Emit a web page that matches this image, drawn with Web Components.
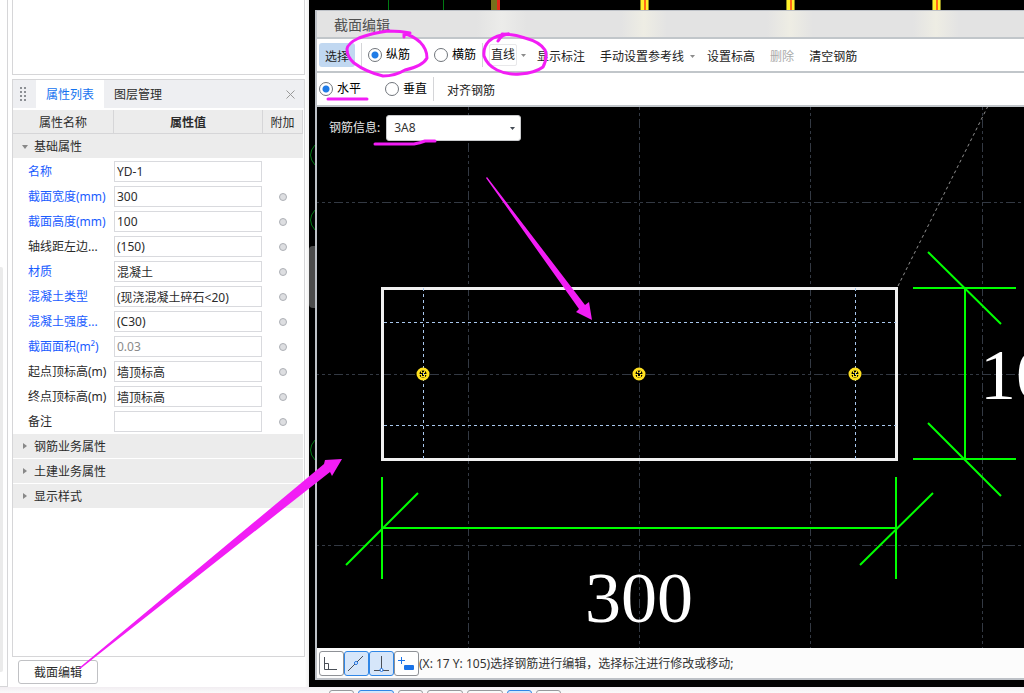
<!DOCTYPE html>
<html lang="zh-CN">
<head>
<meta charset="utf-8">
<title>截面编辑</title>
<style>
  html, body { margin: 0; height: 100%; overflow: hidden; }
  body {
    font: 12px/16px "Noto Sans", "Noto Sans CJK SC", sans-serif;
    color: #2b2b2b;
    background: #fdfdfd;
  }
</style>
</head>
<body>
<app-shell>
  <property-dock slot="dock"></property-dock>
  <section-editor slot="work" heading="截面编辑">
    <tool-bar slot="tools">
      <tool-button active>选择</tool-button>
      <tool-separator></tool-separator>
      <radio-pair name="bar" first="纵筋" second="横筋"></radio-pair>
      <tool-separator></tool-separator>
      <tool-group>
        <tool-button menu framed>直线</tool-button>
        <tool-button>显示标注</tool-button>
        <tool-button menu>手动设置参考线</tool-button>
        <tool-button>设置标高</tool-button>
        <tool-button disabled>删除</tool-button>
        <tool-button>清空钢筋</tool-button>
      </tool-group>
    </tool-bar>
    <tool-bar slot="tools">
      <radio-pair name="direction" first="水平" second="垂直"></radio-pair>
      <tool-separator></tool-separator>
      <tool-button>对齐钢筋</tool-button>
    </tool-bar>
    <cad-canvas slot="canvas"></cad-canvas>
    <status-bar slot="status">(X: 17 Y: 105)选择钢筋进行编辑，选择标注进行修改或移动;</status-bar>
  </section-editor>
</app-shell>

<script>
const define = (name, html, setup) => {
  const template = document.createElement('template');
  template.innerHTML = html;
  customElements.define(name, class extends HTMLElement {
    constructor() {
      super();
      this.attachShadow({ mode: 'open' }).append(template.content.cloneNode(true));
    }
    connectedCallback() {
      if (setup && !this.ready) { this.ready = true; setup(this, this.shadowRoot); }
    }
  });
};

/* Hand-drawn markers that lie over the whole window */
define('markup-layer', `
<style>
  :host { position: absolute; inset: 0; pointer-events: none; }
  svg { display: block; width: 100%; height: 100%; }
</style>
<svg aria-hidden="true" fill="none" stroke="#f21df5" stroke-width="3" stroke-linecap="round" stroke-linejoin="round">
  <path d="M404 37V34L410 33Q401 31 388 31Q372 33 359 38Q348 43 347 49Q347 57 354 63Q366 72 383 76Q395 76 405 70Q423 66 427 58Q427 49 420 42Q412 35 404 34"/>
  <path d="M498 41Q502 34 509 34Q496 35 489 41Q483 47 484 56Q487 65 497 70Q507 75 520 74Q535 73 543 67Q548 57 545 50Q540 42 525 38Q513 34 502 34"/>
  <path d="M328 99H367M375 144H414Q420 143 425 141H435"/>
  <g fill="#f21df5" stroke="none">
    <path d="M79 668L324 464L325 460L342 459L332 476L330 472L80 669Z"/>
    <path d="M487 177L585 305L589 302L592 320L576 312L579 309L486 178Z"/>
  </g>
</svg>`);

define('bottom-strip', `
<style>
  :host { display: flex; gap: 4px; height: 6px; padding: 3px 0 0 329px; box-sizing: border-box;
          overflow: hidden; background: linear-gradient(#f1edf1, #fafafa); }
  i { flex: none; box-sizing: border-box; width: 25px; height: 20px; border: 1px solid #97999d; border-radius: 3px; background: #fafafa; }
  i.wide { width: 36px; }
  i.on { border-color: #2f86e6; background: #d6e6fa; }
</style>
<i></i><i class="wide on"></i><i></i><i class="wide"></i><i class="wide"></i><i class="on"></i><i></i>`);

define('app-shell', `
<style>
  :host { position: relative; display: flex; flex-direction: column; height: 100vh; overflow: hidden; }
  main { flex: 1; min-height: 0; display: flex; }
  .edge { flex: none; width: 7px; border-right: 1px solid #d6d6d8; border-bottom: 1px solid #d6d6d8; background: #fff; }
  .edge i { display: block; width: 3px; height: 59%; margin-top: 267px; border-radius: 0 2px 2px 0; background: #ebebeb; }
  .dock { flex: none; display: flex; width: 293px; padding: 0 4px; background: linear-gradient(90deg, #fff 297px, #eee); }
  .work { flex: 1; min-width: 0; display: flex; }
</style>
<main>
  <div class="edge"><i></i></div>
  <div class="dock"><slot name="dock"></slot></div>
  <div class="work"><slot name="work"></slot></div>
</main>
<bottom-strip></bottom-strip>
<markup-layer></markup-layer>`);

define('property-dock', `
<style>
  :host { flex: 1; min-width: 0; display: flex; flex-direction: column; }
  .upper { height: 74px; border: 1px solid #d6d6d8; border-top: 0; background: #fff; }
  .panel { flex: 1; margin-top: 4px; border: 1px solid #d6d6d8; background: #fff; }
  header { display: flex; height: 28px; margin-bottom: 2px; background: #eeeff2; }
  .grip { width: 23px; padding-right: 2px; box-sizing: border-box; display: grid; place-items: center; }
  button { font: inherit; color: inherit; border: 0; background: none; padding: 0; }
  .tab { padding: 2px 10px 0; }
  .tab.on { color: #1473f0; background: #fff; }
  .close { margin-left: auto; width: 28px; display: grid; place-items: center; }
  .foot { padding: 3px 6px; }
  .edit { display: block; width: 80px; height: 24px; padding-top: 2px; border: 1px solid #c0c1c4; border-radius: 3px; background: #fff; }
</style>
<div class="upper"></div>
<section class="panel">
  <header>
    <span class="grip"><svg width="7" height="14" fill="#8c8f94"><path d="M0 0h2v2H0zM4 0h2v2H4zM0 4h2v2H0zM4 4h2v2H4zM0 8h2v2H0zM4 8h2v2H4zM0 12h2v2H0zM4 12h2v2H4z"/></svg></span>
    <button class="tab on">属性列表</button><button class="tab">图层管理</button>
    <button class="close" aria-label="关闭"><svg width="9" height="9" stroke="#999"><path d="M.5 .5l8 8M8.5 .5l-8 8"/></svg></button>
  </header>
  <property-table></property-table>
</section>
<div class="foot"><button class="edit">截面编辑</button></div>`);

define('property-table', `
<style>
  :host { display: block; }
  table { width: 290px; table-layout: fixed; border-collapse: separate; border-spacing: 0; }
  th, td { padding: 0; height: 25px; box-sizing: border-box; }
  thead th { height: 24px; padding-top: 2px; font-weight: 400; background: #ececec; border-right: 1px solid #d6d6d8; border-bottom: 1px solid #d6d6d8; }
  thead th.value { font-weight: 600; }
  .group th { text-align: left; font-weight: 400; background: #ececec; border-bottom: 1px solid #fff; padding: 2px 0 0 8px; }
  .group span { display: flex; align-items: center; gap: 5px; }
  .group svg { width: 8px; height: 8px; fill: #888; }
  tbody td { text-align: left; }
  td.name { padding-left: 15px; white-space: nowrap; }
  td.name.blue { color: #1a5cff; }
  input.text { display: block; box-sizing: border-box; width: 148px; height: 21px; padding: 0 2px;
    border: 1px solid #d9dade; background: #fff; font: inherit; color: inherit; outline: 0; }
  input.text:disabled { color: #8a8a8a; }
  input.extra { display: block; appearance: none; box-sizing: border-box; width: 8px; height: 8px; margin: 0 auto; border: 1px solid #adb0b5; border-radius: 50%; background: #dddee1; }
</style>
<table>
  <colgroup><col style="width:101px"><col style="width:149px"><col></colgroup>
  <thead><tr><th>属性名称</th><th class="value">属性值</th><th>附加</th></tr></thead>
  <tbody></tbody>
</table>`, (host, root) => {
  const rows = [
    ['名称', 'YD-1', 1, 0], ['截面宽度(mm)', '300', 1, 1], ['截面高度(mm)', '100', 1, 1],
    ['轴线距左边...', '(150)', 0, 1], ['材质', '混凝土', 1, 1], ['混凝土类型', '(现浇混凝土碎石<20)', 1, 1],
    ['混凝土强度...', '(C30)', 1, 1], ['截面面积(m²)', '0.03', 1, 1, 'disabled'],
    ['起点顶标高(m)', '墙顶标高', 0, 1], ['终点顶标高(m)', '墙顶标高', 0, 1], ['备注', '', 0, 1]
  ];
  const group = (text, open) => `<tr class="group"><th colspan="3"><span><svg><path d="${open ? 'M1 2h6L4 6z' : 'M2 0v6l4-3z'}"/></svg>${text}</span></th></tr>`;
  root.querySelector('tbody').innerHTML = group('基础属性', true) +
    rows.map(([name, value, blue, extra, state = ''], i) => `<tr>
      <td class="name ${blue ? 'blue' : ''}"><label for="p${i}">${name}</label></td>
      <td class="value"><input class="text" id="p${i}" value="${value.replace('<', '&lt;')}" ${state}></td>
      <td>${extra ? `<input class="extra" type="checkbox" aria-label="附加 ${name}">` : ''}</td></tr>`).join('') +
    ['钢筋业务属性', '土建业务属性', '显示样式'].map(t => group(t, false)).join('');
});

/* Model view with the section editor window docked over it */
define('section-editor', `
<style>
  :host { position: relative; flex: 1; min-width: 0; display: flex; box-sizing: border-box; padding: 10px 0 7px 6px; background: #000; }
  .model { position: absolute; inset: 0; width: 100%; height: 100%; }
  .window { position: relative; flex: 1; min-width: 0; display: flex; flex-direction: column; border: solid #bdc1c7; border-width: 1px 0 2px 2px; background: #fff; }
  h1 { margin: 0; box-sizing: border-box; height: 28px; padding: 0 17px; border-bottom: 2px solid #c1c6ca; font-size: 14px; line-height: 28px; font-weight: 400; color: #505050;
    background: linear-gradient(90deg, #0000 160px, #ececea 185px, #0000 210px, #0000 304px, #eeede4 327px, #0000 350px, #0000 450px, #eeede4 473px, #0000 496px, #0000 596px, #eeede4 619px, #0000 642px), #e3e3e3; }
  ::slotted(cad-canvas) { flex: 1; min-height: 0; }
</style>
<svg class="model" aria-hidden="true" fill="none">
  <path stroke="#007a12" d="M79.500 0v11M134.500 0v11M6 145Q-3 155 6 165M6 210Q-3 220 6 230M6 440Q-3 450 6 460"/>
  <path fill="#77701c" d="M182 0h6v11h-6z"/><path fill="#e02818" d="M188 0h3v11h-3z"/>
  <path fill="#8d8a20" d="M331 0h9v11h-9zM477 0h9v11h-9zM623 0h9v11h-9z"/>
  <path fill="#fff02a" d="M332 0h7v11h-7zM478 0h7v11h-7zM624 0h7v11h-7z"/>
  <path fill="#ff6a18" d="M335 0h2v11h-2zM481 0h2v11h-2zM627 0h2v11h-2z"/>
  <rect y="246" width="14" height="62" rx="4" fill="#4b4b4b"/>
</svg>
<div class="window">
  <h1></h1>
  <slot name="tools"></slot>
  <slot name="canvas"></slot>
  <slot name="status"></slot>
</div>`, (host, root) => { root.querySelector('h1').textContent = host.getAttribute('heading'); });

define('tool-bar', `
<style>
  :host { display: flex; align-items: center; gap: 6px; box-sizing: border-box; height: 34px; padding: 0 2px; border-bottom: 2px solid #c1c6ca; background: #fff; white-space: nowrap; color: #222; }
</style><slot></slot>`);

define('tool-group', `<style>:host { display: flex; align-items: center; gap: 1px; }</style><slot></slot>`);

define('tool-separator', `<style>:host { width: 1px; height: 24px; background: #d4d5d8; }</style>`);

define('tool-button', `
<style>
  :host { display: block; }
  button { display: flex; align-items: center; box-sizing: border-box; height: 24px; padding: 3px 7px 0; border: 0; border-radius: 3px; background: none; font: inherit; color: inherit; }
  button:disabled { color: #aaa; }
  svg { display: none; width: 5px; height: 3px; margin-left: 6px; fill: #8c8c8c; }
  :host([menu]) svg { display: block; }
  :host([menu]) button { padding-right: 4px; }
  :host([active]) button { padding: 3px 6px 0; background: #c1d8f1; }
  :host([framed]) button { padding: 0 3px 0 0; }
  :host([framed]) span { padding: 2px 1px; border: 1px solid #e8e8ea; border-radius: 2px; }
  :host([framed]) svg { margin-left: 4px; }
</style>
<button><span><slot></slot></span><svg><path d="M0 0h5L2.500 3z"/></svg></button>`,
(host, root) => { root.querySelector('button').disabled = host.hasAttribute('disabled'); });

define('radio-pair', `
<style>
  :host { display: flex; gap: 24px; color: #000; }
  label { display: flex; align-items: center; gap: 4px; }
  input { appearance: none; box-sizing: border-box; width: 14px; height: 14px; margin: 0; border: 1px solid #70757b; border-radius: 50%; background: #fff; }
  input:checked { background: radial-gradient(circle, #1f7be6 3px, #fff 4px); }
</style>
<label><input type="radio" checked><span></span></label>
<label><input type="radio"><span></span></label>`, (host, root) => {
  root.querySelectorAll('label').forEach((label, i) => {
    label.querySelector('input').name = host.getAttribute('name');
    label.querySelector('span').textContent = host.getAttribute(i ? 'second' : 'first');
  });
});

/* Section drawing: coordinates are window pixels, moved to the canvas origin by the outer group */
define('cad-canvas', `
<style>
  :host { position: relative; display: block; overflow: hidden; background: #000; }
  .drawing { position: absolute; inset: 0; width: 100%; height: 100%; }
  .info { position: absolute; left: 12px; top: 8px; display: flex; align-items: center; gap: 6px; color: #e6e6e6; }
  .info span { position: relative; }
  select { display: block; appearance: none; box-sizing: border-box; width: 135px; height: 26px; padding: 0 7px; border: 1px solid #c9cacc; border-radius: 3px; background: #fff; font: inherit; color: #333; }
  .info svg { position: absolute; right: 6px; top: 12px; fill: #444b55; }
  text { font: 72px "Liberation Serif", serif; fill: #fff; }
</style>
<svg class="drawing" fill="none" role="img" aria-label="截面 300 × 100">
  <defs>
    <g id="bar"><circle r="5" stroke="#ffe020" stroke-width="3"/><path stroke="#ffe020" d="M-1.500 -3v2M1.500 -3v2M-1.500 1v2M1.500 1v2M-4 .5h3M1 .5h3M-.5 -1.500h2M-1 2.500h2"/></g>
  </defs>
  <g transform="translate(-317 -107)">
    <g stroke="#333943" stroke-dasharray="9 3 3 3 3 3">
      <path stroke-dashoffset="11" d="M468.500 106V660M639.500 106V660M810.500 106V660M982.500 106V660"/>
      <path stroke-dashoffset="7" d="M317 202.500H2000M317 374.500H2000M317 545.500H2000"/>
    </g>
    <path stroke="#909090" stroke-dasharray="3 3" d="M898 286L988 106"/>
    <rect x="382.500" y="288.500" width="514" height="171" stroke="#f0f0f0" stroke-width="3"/>
    <path stroke="#a9c8ee" stroke-dasharray="3 3" d="M384 322.500H896M384 425.500H896M423.500 288V459M855.500 288V459"/>
    <use href="#bar" x="423" y="374"/><use href="#bar" x="639" y="374"/><use href="#bar" x="855" y="374"/>
    <g stroke="#00ff00" stroke-width="2">
      <path d="M382 528H896M382 477V579M896 477V579M346 565L418 493M860 565L933 493"/>
      <path d="M965 288V459M913 288H1016M913 459H1016M928 252L1001 324M928 423L1001 496"/>
    </g>
    <text x="639" y="622" text-anchor="middle">300</text>
    <text x="980" y="399">100</text>
  </g>
</svg>
<div class="info">
  <label for="rebar">钢筋信息:</label>
  <span><select id="rebar"><option>3A8</option></select><svg width="5" height="3"><path d="M0 0h5L2.500 3z"/></svg></span>
</div>`);

define('status-bar', `
<style>
  :host { display: flex; align-items: center; box-sizing: border-box; height: 30px; padding: 0 2px; background: #fcfcfc; white-space: nowrap; color: #333; }
  button { box-sizing: border-box; width: 25px; height: 25px; padding: 0; border: 1px solid #8e9196; border-radius: 3px; background: #fff; }
  button.on { border-color: #2f86e6; background: #d6e6fa; }
  svg { display: block; width: 23px; height: 23px; fill: none; stroke: #4a4f57; }
  .blue { stroke: #1a73e8; }
  p { margin: 0; padding-top: 2px; }
</style>
<button aria-label="正交"><svg><path d="M4.500 5v12.500H17M4.500 11.500h4v6"/></svg></button>
<button class="on" aria-label="中点"><svg><path d="M3 19L18 4"/><circle class="blue" cx="11" cy="11" r="1.500" fill="#fff"/></svg></button>
<button class="on" aria-label="垂点"><svg><path d="M11.500 4v14M4 18.500h15"/><circle class="blue" cx="11.500" cy="18" r="1.500" fill="#fff"/></svg></button>
<button aria-label="动态输入"><svg><path class="blue" d="M3 8.500h7M6.500 5v7"/><rect x="9" y="13" width="10" height="5" rx="1" fill="#1a73e8" stroke="none"/></svg></button>
<p><slot></slot></p>`);
</script>
</body>
</html>
